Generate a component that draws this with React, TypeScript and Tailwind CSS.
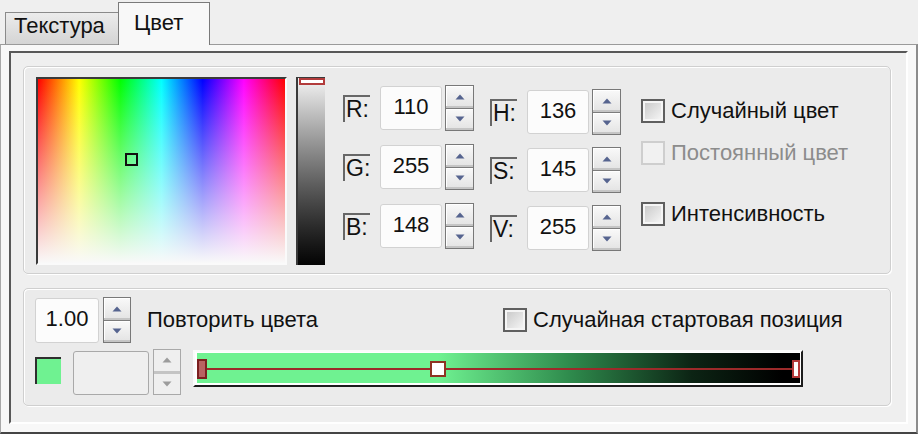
import React from "react";

function Tri({ up, disabled = false }: { up: boolean; disabled?: boolean }) {
  const fill = disabled ? "#9c9c9c" : "#56648f";
  return (
    <svg width="10" height="6" viewBox="0 0 10 6" className="block">
      <polygon points={up ? "0.5,5.5 5,0.5 9.5,5.5" : "0.5,0.5 5,5.5 9.5,0.5"} fill={fill} />
    </svg>
  );
}

function Spin({ className = "", disabled = false }: { className?: string; disabled?: boolean }) {
  if (disabled) {
    return (
      <div className={`flex flex-col border border-[#a9a9a9] bg-[#efefef] ${className}`}>
        <div className="flex-1 flex items-center justify-center border-b-[3px] border-[#c4c4c4]">
          <Tri up disabled />
        </div>
        <div className="flex-1 flex items-center justify-center">
          <Tri up={false} disabled />
        </div>
      </div>
    );
  }
  return (
    <div className={`flex flex-col border border-[#787878] bg-[#e6e6e6] ${className}`}>
      <div className="flex-1 flex items-center justify-center border-b border-[#7c7c7c] bg-linear-to-b from-[#f9f9f9] to-[#e3e3e3] shadow-[inset_0_-2px_0_#c5c5c5,inset_1px_1px_0_#ffffff]">
        <Tri up />
      </div>
      <div className="flex-1 flex items-center justify-center bg-linear-to-b from-[#f9f9f9] to-[#e3e3e3] shadow-[inset_0_-2px_0_#c5c5c5,inset_1px_1px_0_#ffffff]">
        <Tri up={false} />
      </div>
    </div>
  );
}

function Lbl({ t }: { t: string }) {
  return (
    <div className="w-[27px] h-[27px] shrink-0 border-t-2 border-l-2 border-[#676767] pl-[1px] pt-[1px] text-[23px] leading-[23px] whitespace-nowrap">
      {t}
    </div>
  );
}

function Field({ label, value }: { label: string; value: string }) {
  return (
    <div className="flex items-center h-[46px]">
      <Lbl t={label} />
      <div className="ml-[10px] w-[62px] h-[44px] rounded-[3px] border border-[#d2d2d2] bg-[#fcfcfc] flex items-center justify-center pb-[3px] text-[22px] leading-none">
        {value}
      </div>
      <Spin className="ml-[3px] w-[29px] h-[46px]" />
    </div>
  );
}

function Check({ disabled = false }: { disabled?: boolean }) {
  return disabled ? (
    <div className="w-[24px] h-[24px] shrink-0 border-2 border-[#cecece] bg-[#f1f1f1]" />
  ) : (
    <div className="w-[24px] h-[24px] shrink-0 border-2 border-[#5f5f5f] bg-[#f5f5f5] p-[2px]">
      <div className="w-full h-full bg-linear-to-br from-[#cbcbcb] to-[#f4f4f4]" />
    </div>
  );
}

function CheckRow({ text, disabled = false, className = "" }: { text: string; disabled?: boolean; className?: string }) {
  return (
    <div className={`flex items-center ${className}`}>
      <Check disabled={disabled} />
      <span className={`ml-[6px] text-[22px] leading-none whitespace-nowrap ${disabled ? "text-[#8c8c8c]" : "text-[#111111]"}`}>
        {text}
      </span>
    </div>
  );
}

export default function App() {
  return (
    <div className="w-[918px] h-[434px] bg-[#efefef] flex flex-col overflow-hidden font-['Liberation_Sans',Arial,sans-serif] text-[#111111]">
      {/* tab strip */}
      <div className="h-[44px] shrink-0 flex items-end pl-[5px] relative z-10">
        <div className="w-[114px] h-[32px] border border-b-0 border-[#8a8a8a] bg-linear-to-b from-[#ececec] to-[#d4d4d4] pl-[8px] pt-[2px] text-[22px] leading-[22px]">
          Текстура
        </div>
        <div className="w-[92px] h-[43px] -ml-px -mb-px border border-b-0 border-[#7a7a7a] bg-[#f8f8f8] pl-[15px] pt-[9px] text-[22px] leading-[22px]">
          Цвет
        </div>
      </div>

      {/* page */}
      <div className="flex-1 flex border-t border-l border-r-2 border-b-2 border-t-[#9a9a9a] border-l-[#a8a8a8] border-r-[#8c8c8c] border-b-[#454545] bg-[#f8f8f8] pl-[8px] pt-[6px] pr-[8px] pb-[8px]">
        {/* sunken frame */}
        <div className="flex-1 flex flex-col border-2 border-t-[#585858] border-l-[#585858] border-b-[#ffffff] border-r-[#ffffff] bg-[#efefef] pl-[12px] pt-[13px]">
          {/* panel 1 */}
          <div className="w-[868px] h-[208px] rounded-[5px] border border-[#cfcfcf] bg-[#ebebeb] shadow-[inset_1px_1px_0_#ffffff,1px_1px_0_#ffffff] flex items-start">
            {/* colour field */}
            <div className="ml-[12px] mt-[10px] w-[251px] h-[188px] border-2 border-t-[#3a3a3a] border-l-[#3a3a3a] border-b-[#fafafa] border-r-[#fafafa] relative">
              <div className="w-full h-full bg-[linear-gradient(to_right,#ff0000,#ffff00,#00ff00,#00ffff,#0000ff,#ff00ff,#ff0000)]">
                <div className="w-full h-full bg-linear-to-b from-[rgba(255,255,255,0)] to-[#f9f9f9]" />
              </div>
              <div className="absolute left-[87px] top-[74px] w-[13px] h-[13px] border-2 border-[#111111]" />
            </div>
            {/* value bar */}
            <div className="ml-[9px] mt-[10px] w-[29px] h-[188px] border-l-2 border-t border-[#3a3a3a] relative bg-linear-to-b from-[#f4f4f4] to-[#050505]">
              <div className="absolute left-[1px] right-0 top-0 h-[7px] border-2 border-[#b23b3b] bg-[#ffffff]" />
            </div>
            {/* RGB */}
            <div className="ml-[18px] mt-[18px] flex flex-col gap-[13px]">
              <Field label="R:" value="110" />
              <Field label="G:" value="255" />
              <Field label="B:" value="148" />
            </div>
            {/* HSV */}
            <div className="ml-[16px] mt-[22px] flex flex-col gap-[12px]">
              <Field label="H:" value="136" />
              <Field label="S:" value="145" />
              <Field label="V:" value="255" />
            </div>
            {/* checkboxes */}
            <div className="ml-[20px] mt-[32px] flex flex-col">
              <CheckRow text="Случайный цвет" />
              <CheckRow text="Постоянный цвет" disabled className="mt-[18px]" />
              <CheckRow text="Интенсивность" className="mt-[37px]" />
            </div>
          </div>

          {/* panel 2 */}
          <div className="mt-[14px] w-[868px] h-[118px] rounded-[5px] border border-[#cfcfcf] bg-[#ebebeb] shadow-[inset_1px_1px_0_#ffffff,1px_1px_0_#ffffff] flex flex-col pl-[11px] pt-[8px]">
            <div className="flex items-center h-[46px]">
              <div className="w-[468px] flex items-center">
                <div className="w-[64px] h-[45px] rounded-[3px] border border-[#d2d2d2] bg-[#fcfcfc] flex items-center justify-center pb-[3px] text-[22px] leading-none">
                  1.00
                </div>
                <Spin className="ml-[4px] w-[28px] h-[46px]" />
                <span className="ml-[16px] text-[22px] leading-none whitespace-nowrap">Повторить цвета</span>
              </div>
              <CheckRow text="Случайная стартовая позиция" />
            </div>
            <div className="mt-[6px] flex items-start">
              <div className="mt-[8px] w-[26px] h-[27px] border-t-2 border-l-2 border-[#2f2f2f] bg-[#6ff291]" />
              <div className="ml-[12px] mt-[2px] w-[76px] h-[44px] rounded-[3px] border border-[#a9a9a9] bg-[#efefef]" />
              <Spin disabled className="ml-[4px] w-[28px] h-[46px]" />
              {/* gradient bar */}
              <div className="ml-[12px] mt-[1px] w-[610px] h-[37px] border-2 border-t-[#fbfbfb] border-l-[#fbfbfb] border-b-[#1c1c1c] border-r-[#1c1c1c] bg-[#ffffff] pl-[2px] pt-[1px] pr-px pb-[2px]">
                <div className="relative w-full h-full bg-[linear-gradient(to_right,#6ff291_0%,#6ff291_40%,#2e8a4c_62%,#0c2414_82%,#000000_97%)]">
                  <div className="absolute left-[8px] right-[5px] top-[15px] h-[2px] bg-[#9c2a2a]" />
                  <div className="absolute left-0 top-[6px] w-[10px] h-[20px] border-2 border-[#7c2020] bg-[#b86262]" />
                  <div className="absolute left-[233px] top-[8px] w-[16px] h-[16px] border-2 border-[#8e3322] bg-[#ffffff]" />
                  <div className="absolute right-0 top-[7px] w-[8px] h-[18px] border-2 border-[#b43a3a] bg-[#ffffff]" />
                </div>
              </div>
            </div>
          </div>
        </div>
      </div>
    </div>
  );
}
